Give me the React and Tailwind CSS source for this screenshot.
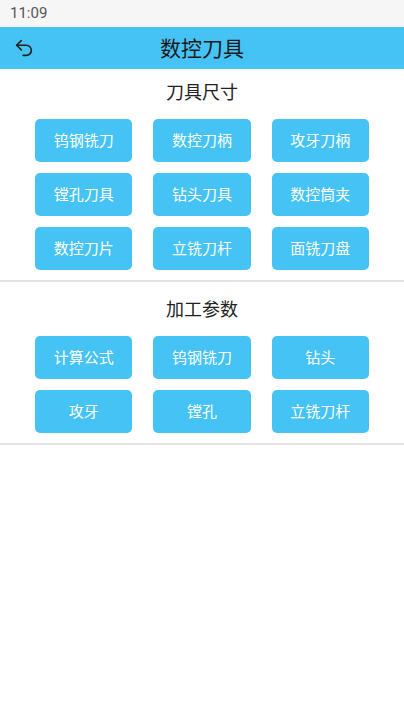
import React from 'react';
import { Undo2 } from 'lucide-react';

const sizes = ['钨钢铣刀', '数控刀柄', '攻牙刀柄', '镗孔刀具', '钻头刀具', '数控筒夹', '数控刀片', '立铣刀杆', '面铣刀盘'];
const params = ['计算公式', '钨钢铣刀', '钻头', '攻牙', '镗孔', '立铣刀杆'];

const font = { fontFamily: '"Noto Sans CJK SC", "Noto Sans", sans-serif' };

const Grid = ({ items }) => (
  <div className="grid grid-cols-3 gap-x-[21px] gap-y-[11px] px-[35px]">
    {items.map((t, i) => (
      <button
        key={i}
        className="h-[43px] rounded-[5px] bg-[#46c3f5] text-white text-[15px] flex items-center justify-center"
      >
        {t}
      </button>
    ))}
  </div>
);

const App = () => {
  return (
    <div className="w-[404px] h-[720px] bg-white flex flex-col" style={font}>
      <div className="h-[27px] bg-[#f6f6f6] flex items-center px-[10px] text-[15px] text-[#555]">
        <span style={{ fontFamily: 'Roboto, "Noto Sans", sans-serif' }}>11:09</span>
      </div>
      <div className="h-[42px] bg-[#46c3f5] flex items-center relative">
        <Undo2 className="w-[22px] h-[22px] text-[#222] ml-[13px]" strokeWidth={1.8} />
        <div className="absolute inset-0 flex items-center justify-center text-[21px] text-[#1a1a1a]">数控刀具</div>
      </div>

      <div className="h-[44px] flex items-center justify-center text-[18px] text-[#222]">刀具尺寸</div>
      <div className="mt-[6px] pb-[10px]">
        <Grid items={sizes} />
      </div>
      <div className="h-[2px] bg-[#e3e3e3]" />

      <div className="h-[52px] flex items-center justify-center text-[18px] text-[#222]">加工参数</div>
      <div className="mt-[2px] pb-[10px]">
        <Grid items={params} />
      </div>
      <div className="h-[2px] bg-[#e3e3e3]" />
    </div>
  );
};

export default App;
